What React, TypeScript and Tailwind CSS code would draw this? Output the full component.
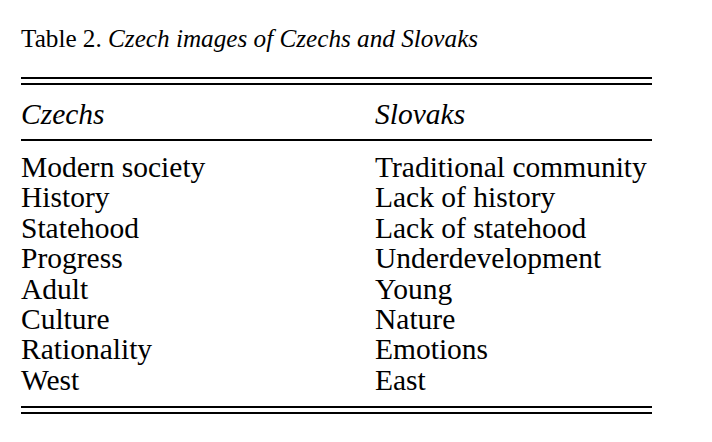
const rows: [string, string][] = [
  ['Modern society', 'Traditional community'],
  ['History', 'Lack of history'],
  ['Statehood', 'Lack of statehood'],
  ['Progress', 'Underdevelopment'],
  ['Adult', 'Young'],
  ['Culture', 'Nature'],
  ['Rationality', 'Emotions'],
  ['West', 'East'],
];

const DoubleRule = () => (
  <div className="flex flex-col gap-[4px]">
    <div className="h-[2px] bg-black" />
    <div className="h-[2px] bg-black" />
  </div>
);

export default function App() {
  return (
    <div
      className="w-[712px] h-[442px] bg-white text-black pl-[21px] pt-[24px]"
      style={{ fontFamily: '"Liberation Serif", "Times New Roman", serif' }}
    >
      <div className="w-[631px]">
        <h1 className="text-[25.2px] leading-[30px] font-normal">
          Table 2. <span className="italic">Czech images of Czechs and Slovaks</span>
        </h1>

        <div className="mt-[23px]">
          <DoubleRule />
        </div>

        <div className="grid grid-cols-[354px_1fr] text-[29.5px] leading-[30px] italic mt-[14px]">
          <div>Czechs</div>
          <div>Slovaks</div>
        </div>

        <div className="h-[2px] bg-black mt-[10px]" />

        <div className="grid grid-cols-[354px_1fr] text-[29.5px] leading-[30.4px] mt-[11px]">
          {rows.map(([cz, sk]) => (
            <div key={cz} className="contents">
              <div>{cz}</div>
              <div>{sk}</div>
            </div>
          ))}
        </div>

        <div className="mt-[11px]">
          <DoubleRule />
        </div>
      </div>
    </div>
  );
}
